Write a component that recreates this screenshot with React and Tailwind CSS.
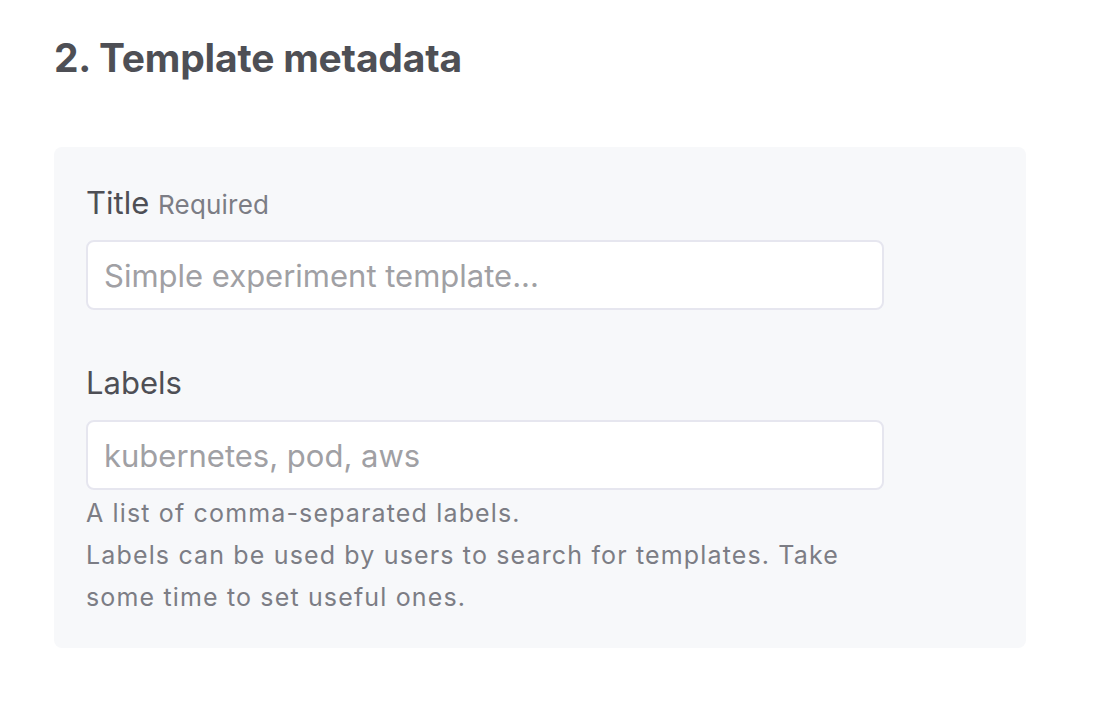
export default function App() {
  return (
    <div className="min-h-[712px] bg-white pl-[54px] pt-[34px] font-['Inter',sans-serif]">
      <h2 className="text-[39px] font-bold leading-[48px] tracking-[-0.2px] text-[#4e4f55]">2. Template metadata</h2>

      <div className="mt-[65px] w-[972px] rounded-lg bg-[#f7f8fa] px-[32px] pt-[36px] pb-[30px]">
        <label className="block text-[31px] leading-[40px] text-[#4e4f55]">
          Title <span className="text-[26px] tracking-[0.2px] text-[#7c7d85]">Required</span>
        </label>
        <input
          className="mt-[15px] block h-[70px] w-[798px] rounded-lg border-2 border-[#e6e6ef] bg-white px-[16px] text-[31px] text-[#4e4f55] placeholder:text-[#a0a0a4] outline-none"
          placeholder="Simple experiment template..."
        />

        <label className="mt-[53px] block text-[31px] leading-[40px] text-[#4e4f55]">Labels</label>
        <input
          className="mt-[17px] block h-[70px] w-[798px] rounded-lg border-2 border-[#e6e6ef] bg-white px-[16px] text-[31px] text-[#4e4f55] placeholder:text-[#a0a0a4] outline-none"
          placeholder="kubernetes, pod, aws"
        />
        <p className="mt-[2px] w-[798px] text-[25px] leading-[42px] tracking-[1.15px] text-[#7c7d85]">
          A list of comma-separated labels.
          <br />
          Labels can be used by users to search for templates. Take some time to set useful ones.
        </p>
      </div>
    </div>
  );
}
